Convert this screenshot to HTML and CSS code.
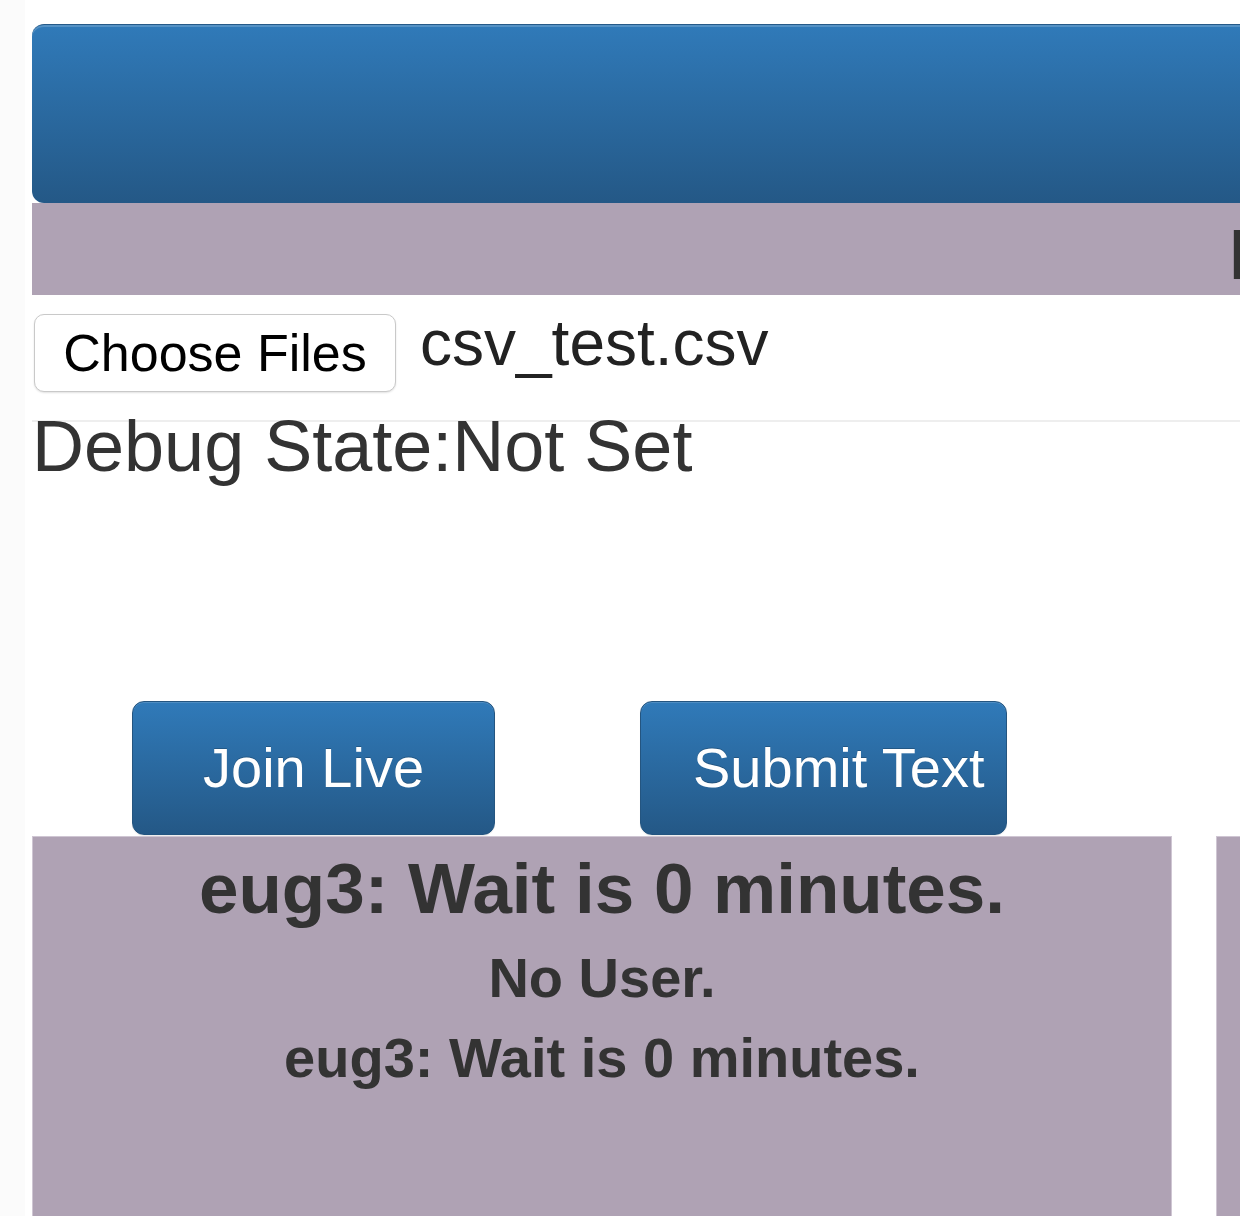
FILE: index.html
```html
<!DOCTYPE html>
<html>
<head>
<meta charset="utf-8">
<title>Queue</title>
<link rel="stylesheet" href="styles.css">
</head>
<body>
<div class="page">
  <div class="header-bar"></div>
  <div class="title-band"><span class="band-text">File Queue</span></div>
  <div class="file-row">
    <button class="file-btn" type="button">Choose Files</button>
    <span class="file-name">csv_test.csv</span>
  </div>
  <div class="debug">Debug State:Not Set</div>
  <div class="actions">
    <button class="btn btn-join" type="button">Join Live</button>
    <button class="btn btn-submit" type="button">Submit Text</button>
  </div>
  <div class="panels">
    <div class="panel">
      <h1 class="wait-main">eug3: Wait is 0 minutes.</h1>
      <h2 class="user">No User.</h2>
      <h2 class="wait-sub">eug3: Wait is 0 minutes.</h2>
    </div>
    <div class="panel panel-second"></div>
  </div>
</div>
</body>
</html>
```

FILE: styles.css
```css
html {
  background: #fbfbfb;
}
body {
  margin: 0 0 0 25px;
  padding: 24px 0 0 7px;
  background: #ffffff;
  overflow: hidden;
  height: 1192px;
  font-family: "Liberation Sans", Helvetica, Arial, sans-serif;
  color: #333333;
}
.page {
  width: 1500px;
}
.header-bar {
  height: 178px;
  border-top: 1px solid #265a88;
  border-radius: 12px 0 0 12px;
  background-image: linear-gradient(to bottom, #307ab9 0%, #245886 100%);
  box-shadow: inset 0 2px 0 rgba(255, 255, 255, 0.18);
}
.title-band {
  height: 92px;
  background: #afa2b4;
  padding-left: 1196px;
  line-height: 104px;
  font-size: 71px;
  white-space: nowrap;
  overflow: hidden;
  color: #333333;
}
.file-row {
  display: flex;
  align-items: flex-start;
  padding: 19px 0 28px 2px;
  border-bottom: 2px solid #eeeeee;
}
.file-btn {
  flex-shrink: 0;
  height: 78px;
  width: 362px;
  padding: 0;
  border: 1px solid #c9c9c9;
  border-radius: 10px;
  background: #ffffff;
  box-shadow: 0 1px 2px rgba(0, 0, 0, 0.12);
  font-family: "Liberation Sans", Helvetica, Arial, sans-serif;
  font-size: 52px;
  color: #000000;
  line-height: 76px;
}
.file-name {
  margin-left: 24px;
  margin-top: -3px;
  font-size: 64px;
  line-height: 64px;
  color: #222222;
}
.debug {
  margin-top: -12px;
  font-size: 72px;
  line-height: 72px;
  color: #333333;
}
.actions {
  display: flex;
  margin-top: 219px;
  padding-left: 100px;
  gap: 145px;
}
.btn {
  flex-shrink: 0;
  height: 134px;
  border: 1px solid #245580;
  border-radius: 12px;
  background-image: linear-gradient(to bottom, #307ab9 0%, #245886 100%);
  box-shadow: inset 0 1px 0 rgba(255, 255, 255, 0.15), 0 1px 1px rgba(0, 0, 0, 0.075);
  color: #ffffff;
  font-family: "Liberation Sans", Helvetica, Arial, sans-serif;
  font-size: 56px;
  line-height: 132px;
  text-shadow: 0 -1px 0 rgba(0, 0, 0, 0.2);
  white-space: nowrap;
  text-align: left;
}
.btn-join {
  width: 363px;
  padding: 0 0 0 70px;
}
.btn-submit {
  width: 367px;
  padding: 0 0 0 52px;
}
.panels {
  display: flex;
  gap: 44px;
  margin-top: 1px;
}
.panel {
  flex-shrink: 0;
  width: 1140px;
  height: 420px;
  box-sizing: border-box;
  background: #afa2b4;
  border: 1px solid #cfc6d3;
  text-align: center;
  color: #333333;
  padding-top: 12px;
}
.panel-second {
  width: 400px;
}
.wait-main {
  margin: 0;
  font-size: 71px;
  line-height: 80px;
  font-weight: bold;
}
.user {
  margin: 9px 0 0;
  font-size: 56px;
  line-height: 80px;
  font-weight: bold;
}
.wait-sub {
  margin: 0;
  font-size: 56px;
  line-height: 80px;
  font-weight: bold;
}
```
